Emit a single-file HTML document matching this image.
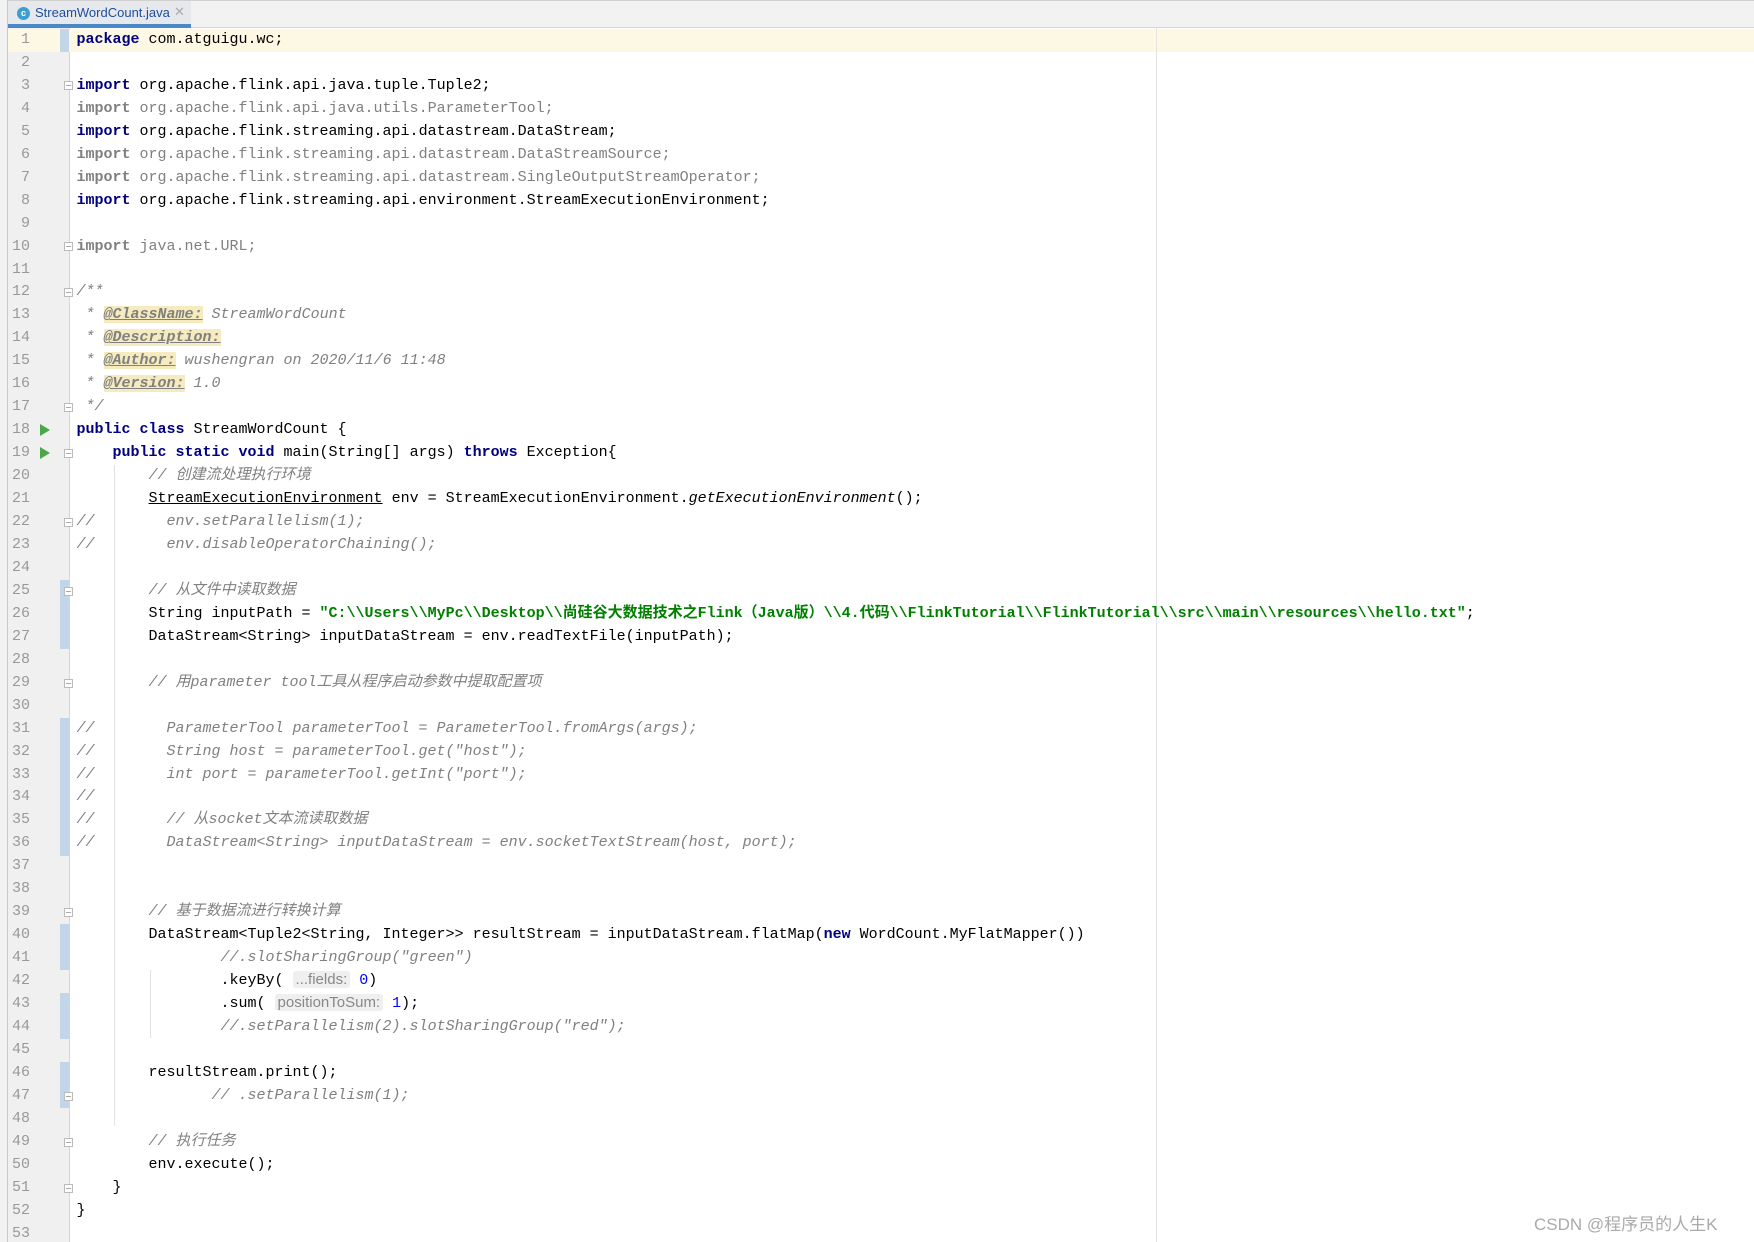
<!DOCTYPE html>
<html><head><meta charset="utf-8"><style>
html,body{margin:0;padding:0;width:1754px;height:1242px;overflow:hidden;background:#fff;position:relative}
#strip{position:absolute;left:0;top:0;width:7px;height:1242px;background:#f2f2f2;border-right:1px solid #c9c9c9}
#tabbar{position:absolute;left:8px;top:0;width:1746px;height:28px;background:#f2f2f2;border-top:1px solid #d0d0d0;border-bottom:1px solid #d6d6d6;box-sizing:border-box}
#tab{position:absolute;left:8px;top:1px;width:183px;height:27px;background:#e6e8ec;box-sizing:border-box;border-bottom:4px solid #4a88c7;font:13px "Liberation Sans",sans-serif;color:#1a4d99}
#tab .ic{position:absolute;left:9px;top:6px;width:13px;height:13px;border-radius:50%;background:#3d9fd0;color:#fff;font:bold 9px "Liberation Sans";text-align:center;line-height:13px}
#tab .t{position:absolute;left:27px;top:4px;color:#1d4f9c}
#tab .x{position:absolute;left:166px;top:3px;color:#aaa;font-size:13px}
#gutter{position:absolute;left:8px;top:28px;width:61px;height:1214px;background:#f0f0f0;border-right:1px solid #d5d5d5}
.hl{position:absolute;left:69px;top:29px;width:1685px;height:23px;background:#fdf8e3}
.hlg{position:absolute;left:8px;top:29px;width:52px;height:23px;background:#fdf8e3}
.bar{position:absolute;left:60px;width:9px;background:#c3d5e8}
#margin{position:absolute;left:1156px;top:28px;width:1px;height:1214px;background:#e4e4e4}
.guide{position:absolute;width:1px;background:#e2e2e2}
.ln{position:absolute;left:8px;width:22px;text-align:right;font:15px "Liberation Mono",monospace;color:#999;line-height:23px}
.run{position:absolute;left:40px;width:0;height:0;border-left:10px solid #4aa84a;border-top:6px solid transparent;border-bottom:6px solid transparent}
.fold{position:absolute;left:64px;width:9px;height:9px;border:1px solid #bbb;background:#fff;box-sizing:border-box}
.fold:after{content:"";position:absolute;left:1px;right:1px;top:3px;height:1px;background:#aaa}
#code{position:absolute;left:76.5px;top:29px;margin:0;font:15px "Liberation Mono","Noto Sans CJK SC",monospace;line-height:22.95px;color:#000;white-space:pre}
.k{color:#000080;font-weight:bold}
.g{color:#808080}
.c{color:#808080;font-style:italic}
.s{color:#008000;font-weight:bold}
.n{color:#0000ff}
.tag{color:#808080;font-weight:bold;font-style:italic;text-decoration:underline;background:#f5ebbf}
.u{text-decoration:underline}
.m{font-style:italic}
.hint{font:15px "Liberation Sans",sans-serif;color:#888;background:#efefef;border-radius:3px;padding:0 3px}
#wm{position:absolute;left:1534px;top:1210px;font:17px "Liberation Sans","Noto Sans CJK SC",sans-serif;color:#aaa}
</style></head><body>
<div id="strip"></div>
<div id="tabbar"></div>
<div id="tab"><div class="ic">c</div><div class="t">StreamWordCount.java</div><div class="x">✕</div></div>
<div id="gutter"></div>
<div class="hlg"></div>
<div class="hl"></div>
<div id="margin"></div>
<div class="bar" style="top:29px;height:23px"></div>
<div class="bar" style="top:580px;height:69px"></div>
<div class="bar" style="top:718px;height:138px"></div>
<div class="bar" style="top:924px;height:46px"></div>
<div class="bar" style="top:993px;height:46px"></div>
<div class="bar" style="top:1062px;height:46px"></div>
<div class="guide" style="left:114px;top:465px;height:661px"></div>
<div class="guide" style="left:150px;top:970px;height:68px"></div>
<div class="run" style="top:424px"></div>
<div class="run" style="top:447px"></div>
<div class="fold" style="top:81px"></div>
<div class="fold" style="top:242px"></div>
<div class="fold" style="top:288px"></div>
<div class="fold" style="top:403px"></div>
<div class="fold" style="top:449px"></div>
<div class="fold" style="top:518px"></div>
<div class="fold" style="top:587px"></div>
<div class="fold" style="top:679px"></div>
<div class="fold" style="top:908px"></div>
<div class="fold" style="top:1092px"></div>
<div class="fold" style="top:1138px"></div>
<div class="fold" style="top:1184px"></div>
<div class="ln" style="top:29px;height:1214px;white-space:pre;line-height:22.95px">1
2
3
4
5
6
7
8
9
10
11
12
13
14
15
16
17
18
19
20
21
22
23
24
25
26
27
28
29
30
31
32
33
34
35
36
37
38
39
40
41
42
43
44
45
46
47
48
49
50
51
52
53</div>
<pre id="code"><span class="k">package</span> com.atguigu.wc;

<span class="k">import</span> org.apache.flink.api.java.tuple.Tuple2;
<span class="g"><b>import</b> org.apache.flink.api.java.utils.ParameterTool;</span>
<span class="k">import</span> org.apache.flink.streaming.api.datastream.DataStream;
<span class="g"><b>import</b> org.apache.flink.streaming.api.datastream.DataStreamSource;</span>
<span class="g"><b>import</b> org.apache.flink.streaming.api.datastream.SingleOutputStreamOperator;</span>
<span class="k">import</span> org.apache.flink.streaming.api.environment.StreamExecutionEnvironment;

<span class="g"><b>import</b> java.net.URL;</span>

<span class="c">/**</span>
<span class="c"> * <span class="tag">@ClassName:</span> StreamWordCount</span>
<span class="c"> * <span class="tag">@Description:</span></span>
<span class="c"> * <span class="tag">@Author:</span> wushengran on 2020/11/6 11:48</span>
<span class="c"> * <span class="tag">@Version:</span> 1.0</span>
<span class="c"> */</span>
<span class="k">public class</span> StreamWordCount {
    <span class="k">public static void</span> main(String[] args) <span class="k">throws</span> Exception{
        <span class="c">// 创建流处理执行环境</span>
        <span class="u">StreamExecutionEnvironment</span> env = StreamExecutionEnvironment.<span class="m">getExecutionEnvironment</span>();
<span class="c">//        env.setParallelism(1);</span>
<span class="c">//        env.disableOperatorChaining();</span>

        <span class="c">// 从文件中读取数据</span>
        String inputPath = <span class="s">"C:\\Users\\MyPc\\Desktop\\尚硅谷大数据技术之Flink（Java版）\\4.代码\\FlinkTutorial\\FlinkTutorial\\src\\main\\resources\\hello.txt"</span>;
        DataStream&lt;String&gt; inputDataStream = env.readTextFile(inputPath);

        <span class="c">// 用parameter tool工具从程序启动参数中提取配置项</span>

<span class="c">//        ParameterTool parameterTool = ParameterTool.fromArgs(args);</span>
<span class="c">//        String host = parameterTool.get("host");</span>
<span class="c">//        int port = parameterTool.getInt("port");</span>
<span class="c">//</span>
<span class="c">//        // 从socket文本流读取数据</span>
<span class="c">//        DataStream&lt;String&gt; inputDataStream = env.socketTextStream(host, port);</span>


        <span class="c">// 基于数据流进行转换计算</span>
        DataStream&lt;Tuple2&lt;String, Integer&gt;&gt; resultStream = inputDataStream.flatMap(<span class="k">new</span> WordCount.MyFlatMapper())
                <span class="c">//.slotSharingGroup("green")</span>
                .keyBy( <span class="hint">...fields:</span> <span class="n">0</span>)
                .sum( <span class="hint">positionToSum:</span> <span class="n">1</span>);
                <span class="c">//.setParallelism(2).slotSharingGroup("red");</span>

        resultStream.print();
               <span class="c">// .setParallelism(1);</span>

        <span class="c">// 执行任务</span>
        env.execute();
    }
}
</pre>
<div id="wm">CSDN @程序员的人生K</div>
</body></html>
